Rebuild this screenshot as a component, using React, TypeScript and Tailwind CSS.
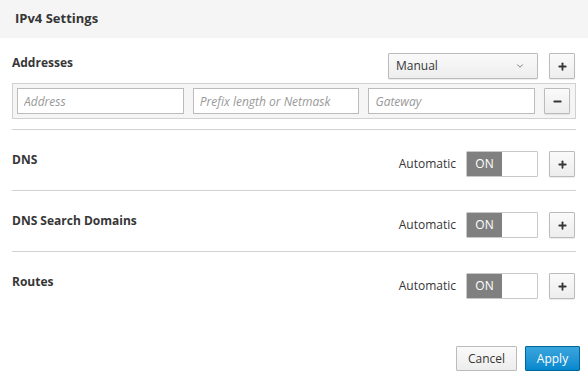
import { ChevronDown, Plus, Minus } from 'lucide-react';

const font = { fontFamily: '"Open Sans", "Liberation Sans", sans-serif' };

function AddButton() {
  return (
    <button className="w-[26px] h-[26px] flex items-center justify-center border border-[#bbb] rounded-[1px] bg-gradient-to-b from-[#fafafa] to-[#ededed] shadow-[0_1px_1px_rgba(3,3,3,0.08)] text-[#363636]">
      <Plus className="w-[11px] h-[11px]" strokeWidth={4} />
    </button>
  );
}

function Toggle() {
  return (
    <div className="flex w-[72px] h-[26px] border border-[#c8c8c8] rounded-[1px] overflow-hidden">
      <div className="w-[35px] bg-[#808080] text-white text-[12px] flex items-center justify-center">ON</div>
      <div className="flex-1 bg-white" />
    </div>
  );
}

function ToggleSection({ label, last }: { label: string; last?: boolean }) {
  return (
    <div className={`flex items-start justify-between pt-[21px] pb-[13px] ${last ? '' : 'border-b border-[#d1d1d1]'}`}>
      <div className="font-bold text-[12px] leading-[16px] pt-[1px]">{label}</div>
      <div className="flex items-center">
        <span className="text-[12px] mr-[10px]">Automatic</span>
        <Toggle />
        <div className="ml-[11px] mr-[1px]">
          <AddButton />
        </div>
      </div>
    </div>
  );
}

export default function App() {
  const inputs = ['Address', 'Prefix length or Netmask', 'Gateway'];
  return (
    <div className="w-[588px] h-[383px] bg-white text-[#363636] flex flex-col" style={font}>
      {/* ヘッダー */}
      <div className="h-[38px] bg-[#f5f5f5] flex items-center px-[15px]">
        <h1 className="font-bold text-[13px]">IPv4 Settings</h1>
      </div>

      <div className="px-[12px]">
        {/* Addresses */}
        <div className="pt-[15px] pb-[10px] border-b border-[#d1d1d1]">
          <div className="flex items-start justify-between">
            <div className="font-bold text-[12px] leading-[16px] pt-[2px]">Addresses</div>
            <div className="flex items-center">
              <div className="w-[150px] h-[26px] flex items-center justify-between pl-[7px] pr-[12px] border border-[#bbb] rounded-[1px] bg-gradient-to-b from-[#fafafa] to-[#ededed] shadow-[0_1px_1px_rgba(3,3,3,0.08)] text-[12px]">
                <span>Manual</span>
                <ChevronDown className="w-[10px] h-[10px] text-[#666]" strokeWidth={2} />
              </div>
              <div className="ml-[11px] mr-[1px]">
                <AddButton />
              </div>
            </div>
          </div>
          <div className="mt-[4px] h-[36px] border border-[#d1d1d1] bg-[#f5f5f5] flex items-center gap-[9px] pl-[4px] pr-[5px]">
            {inputs.map((p) => (
              <input
                key={p}
                placeholder={p}
                className="w-[168px] h-[26px] bg-white border border-[#bbb] px-[6px] text-[12px] italic placeholder:text-[#999] outline-none"
                style={font}
              />
            ))}
            <button className="w-[26px] h-[26px] flex items-center justify-center border border-[#bbb] rounded-[1px] bg-gradient-to-b from-[#fafafa] to-[#ededed] shadow-[0_1px_1px_rgba(3,3,3,0.08)]">
              <Minus className="w-[11px] h-[11px]" strokeWidth={4} />
            </button>
          </div>
        </div>

        <ToggleSection label="DNS" />
        <ToggleSection label="DNS Search Domains" />
        <ToggleSection label="Routes" last />
      </div>

      {/* フッター */}
      <div className="mt-auto flex justify-end gap-[8px] pr-[8px] pb-[12px]">
        <button className="w-[61px] h-[25px] border border-[#bbb] rounded-[1px] bg-gradient-to-b from-[#fafafa] to-[#ededed] text-[12px]">
          Cancel
        </button>
        <button className="w-[55px] h-[25px] border border-[#00659c] rounded-[1px] bg-gradient-to-b from-[#39a5dc] to-[#0088ce] text-white text-[12px]">
          Apply
        </button>
      </div>
    </div>
  );
}
